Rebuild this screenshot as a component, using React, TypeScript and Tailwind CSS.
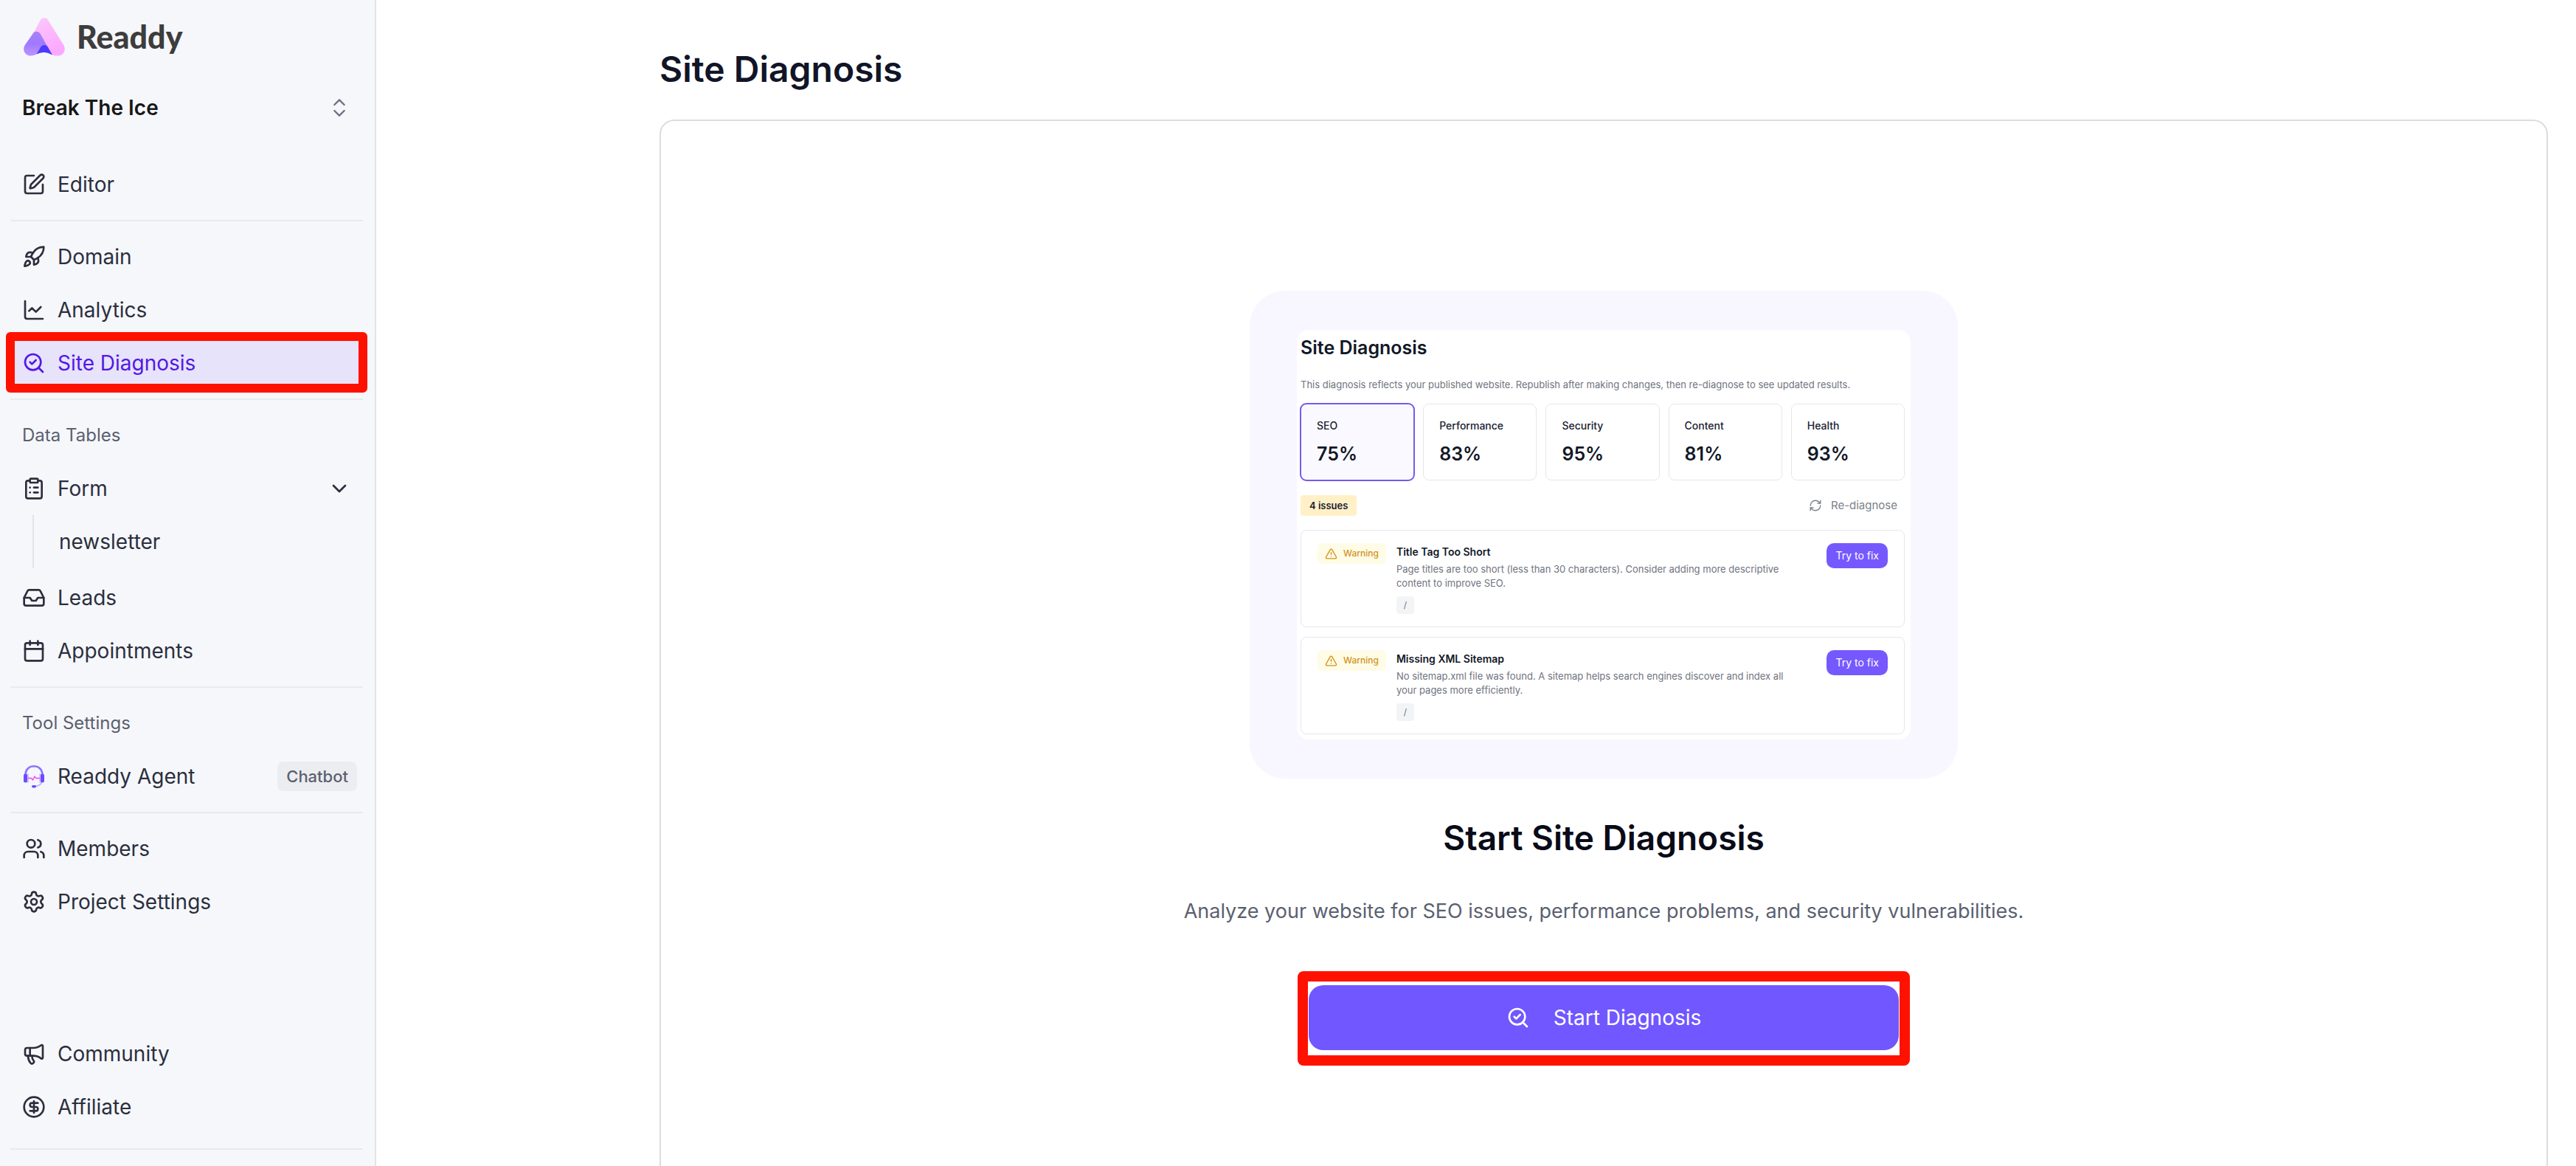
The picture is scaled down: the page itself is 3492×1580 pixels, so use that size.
import React from 'react';
import {
  Calendar,
  ChartLine,
  ChevronDown,
  ChevronsUpDown,
  CircleDollarSign,
  ClipboardList,
  Inbox,
  Megaphone,
  RefreshCw,
  Rocket,
  SearchCheck,
  Settings,
  SquarePen,
  TriangleAlert,
  Users,
} from 'lucide-react';

interface NavItemProps {
  icon: React.ReactNode;
  label: string;
  active?: boolean;
  children?: React.ReactNode;
}

interface Issue {
  title: string;
  description: string;
  path: string;
}

const scores = [
  { label: 'SEO', value: '75%' },
  { label: 'Performance', value: '83%' },
  { label: 'Security', value: '95%' },
  { label: 'Content', value: '81%' },
  { label: 'Health', value: '93%' },
];

const issues: Issue[] = [
  {
    title: 'Title Tag Too Short',
    description:
      'Page titles are too short (less than 30 characters). Consider adding more descriptive content to improve SEO.',
    path: '/',
  },
  {
    title: 'Missing XML Sitemap',
    description:
      'No sitemap.xml file was found. A sitemap helps search engines discover and index all your pages more efficiently.',
    path: '/',
  },
];

const Logo = () => (
  <svg width="56" height="52" viewBox="0 0 56 52" aria-hidden="true">
    <defs>
      <linearGradient id="logoPink" x1="0" y1="0" x2="0.4" y2="1">
        <stop offset="0" stopColor="#fcc8fb" />
        <stop offset="1" stopColor="#fba9ff" />
      </linearGradient>
      <linearGradient id="logoViolet" x1="0" y1="0" x2="0" y2="1">
        <stop offset="0" stopColor="#a783f5" />
        <stop offset="0.5" stopColor="#a079ff" />
        <stop offset="1" stopColor="#bd94ff" />
      </linearGradient>
    </defs>
    <path
      d="M23 3C25-.6 31-.6 33 3L54.500 37.500C58 44 54 51.500 47 51.500C42 51.500 40 51 37 49L14 19.500Z"
      fill="url(#logoPink)"
    />
    <path
      d="M13 21C15 18 20 18 22.500 21.500L38.500 50C34 48 32 47 27 47C19 47 17 51.500 10 51.500C2 51.500-2 44 1.500 37.500Z"
      fill="url(#logoViolet)"
    />
    <path d="M23 40C25 36 31 36 33 40L39 50.500C34 48 32 47 27 47C23 47 21 48 17.500 49.500Z" fill="#4a3bff" />
  </svg>
);

const HeadsetIcon = () => (
  <svg width="32" height="32" viewBox="0 0 32 32" fill="none" aria-hidden="true">
    <path d="M4.500 13C5 6 10 2.300 16 2.300S27 6 27.500 13" stroke="#8b76ff" strokeWidth="2.600" />
    <path d="M27 22C26 27 22 29.500 17 29.500" stroke="#b9a8ff" strokeWidth="1.500" />
    <rect x="5.500" y="12.500" width="3.500" height="12" fill="#cfc5ff" />
    <rect x="23" y="12.500" width="3.500" height="12" fill="#cfc5ff" />
    <rect x="2" y="12.500" width="5" height="12" rx="2.500" fill="#6a4dff" />
    <rect x="25" y="12.500" width="5" height="12" rx="2.500" fill="#6a4dff" />
    <rect x="13" y="28" width="6" height="3.400" rx="1.700" fill="#6a4dff" />
    <path d="M8 18.500H12.500L14.500 21L17 16L18.500 18.500H24" stroke="#f542f0" strokeWidth="1.400" strokeLinejoin="round" />
  </svg>
);

const NavItem: React.FC<NavItemProps> = ({ icon, label, active, children }) => (
  <a
    href="#"
    className={`relative flex h-16 items-center gap-4 rounded-xl pl-4 pr-2 text-[28px] ${
      active ? 'bg-[#e7e3fa] text-[#5219e6]' : 'text-[#2b2f3d]'
    }`}
  >
    {icon}
    <span className="flex-1">{label}</span>
    {children}
    {/* Callout frame */}
    {active && (
      <span className="absolute -inset-x-1.5 -top-2.5 -bottom-2 rounded-md border-12 border-[#ff1100]" />
    )}
  </a>
);

const Divider = () => <hr className="my-4 border-t-2 border-[#e9eaee]" />;

const NavLabel = ({ children }: { children: React.ReactNode }) => (
  <h3 className="mb-2 flex h-16 items-center pl-4 text-2xl text-[#5b6070]">{children}</h3>
);

const Sidebar = () => (
  <aside className="flex w-[510px] shrink-0 flex-col border-r-2 border-[#e3e4e8] bg-[#f6f7fb] pr-4 pl-3.5">
    <div className="flex h-25 items-center gap-4 pl-4.5">
      <Logo />
      <span className="font-[Lato,sans-serif] text-[43px] font-black text-[#3d3d3d]">Readdy</span>
    </div>
    <button className="mt-3.5 mb-10 flex h-16 items-center justify-between pr-4 pl-4 text-[28px] font-semibold text-[#181818]">
      Break The Ice
      <ChevronsUpDown size={32} strokeWidth={1.75} className="text-[#6b7080]" />
    </button>

    <nav className="flex flex-1 flex-col">
      <NavItem icon={<SquarePen size={32} />} label="Editor" />
      <Divider />
      <div className="flex flex-col gap-2">
        <NavItem icon={<Rocket size={32} />} label="Domain" />
        <NavItem icon={<ChartLine size={32} />} label="Analytics" />
        <NavItem icon={<SearchCheck size={32} />} label="Site Diagnosis" active />
      </div>
      <Divider />
      <NavLabel>Data Tables</NavLabel>
      <NavItem icon={<ClipboardList size={32} />} label="Form">
        <ChevronDown size={32} className="mr-2" />
      </NavItem>
      <div className="mt-1 mb-2 ml-7.5 flex h-18 items-center border-l-2 border-[#e3e4e3] pl-8.5">
        <a href="#" className="text-[28px] text-[#2b2f3d]">
          newsletter
        </a>
      </div>
      <div className="flex flex-col gap-2">
        <NavItem icon={<Inbox size={32} />} label="Leads" />
        <NavItem icon={<Calendar size={32} />} label="Appointments" />
      </div>
      <Divider />
      <NavLabel>Tool Settings</NavLabel>
      <NavItem icon={<HeadsetIcon />} label="Readdy Agent">
        <span className="flex h-10 items-center rounded-lg bg-[#ecedf1] px-3 text-[22px] font-medium text-[#5b6070]">
          Chatbot
        </span>
      </NavItem>
      <Divider />
      <div className="flex flex-col gap-2">
        <NavItem icon={<Users size={32} />} label="Members" />
        <NavItem icon={<Settings size={32} />} label="Project Settings" />
      </div>
      <div className="mt-auto flex flex-col gap-2 pt-8">
        <NavItem icon={<Megaphone size={32} />} label="Community" />
        <NavItem icon={<CircleDollarSign size={32} />} label="Affiliate" />
      </div>
      <hr className="mt-6 mb-5.5 border-t-2 border-[#e9eaee]" />
    </nav>
  </aside>
);

const IssueCard = ({ issue }: { issue: Issue }) => (
  <li className="flex items-start rounded-lg border border-[#e5e7eb] px-[22px] py-[17px]">
    <span className="flex h-7 items-center gap-2 rounded-md bg-[#fefce6] px-2.5 text-xs font-medium text-[#d3921a]">
      <TriangleAlert size={17} />
      Warning
    </span>
    <div className="ml-3.5 w-[540px]">
      <h4 className="text-sm leading-6 font-semibold text-[#111827]">{issue.title}</h4>
      <p className="mt-0.5 text-[13px] leading-[19px] text-[#6f7480]">{issue.description}</p>
      <span className="mt-2 flex size-6 items-center justify-center rounded bg-[#f3f4f6] text-xs text-[#6f7480]">
        {issue.path}
      </span>
    </div>
    <button className="ml-auto h-[34px] rounded-[10px] bg-[#7559ff] px-3 text-sm text-white">Try to fix</button>
  </li>
);

const Preview = () => (
  <div className="w-[960px] rounded-[48px] bg-[#f8f6ff] px-16 py-[53px]">
    <div className="rounded-2xl bg-white pt-3 pr-2 pb-[7px] pl-[5px]">
      <h3 className="text-[25px] leading-6 font-semibold text-[#111827]">Site Diagnosis</h3>
      <p className="mt-7 text-[13px] leading-5 text-[#6f7480]">
        This diagnosis reflects your published website. Republish after making changes, then re-diagnose to see updated
        results.
      </p>
      <div className="mt-4 grid grid-cols-5 gap-3">
        {scores.map((score, i) => (
          <div
            key={score.label}
            className={`rounded-lg py-5 pl-[22px] ${
              i === 0 ? 'bg-[#faf9ff] outline-2 -outline-offset-1 outline-[#7559f0]' : 'outline -outline-offset-1 outline-[#e5e7eb]'
            }`}
          >
            <div className="text-sm font-medium text-[#1b2130]">{score.label}</div>
            <div className="mt-3 text-[25px] leading-8 font-semibold text-[#111827]">{score.value}</div>
          </div>
        ))}
      </div>
      <div className="mt-5 flex items-center justify-between">
        <span className="rounded bg-[#fff0c7] px-3 py-1 text-[13px] leading-5 font-semibold text-[#1b2130]">
          4 issues
        </span>
        <button className="flex items-center gap-3 pr-2.5 text-[15px] text-[#7b7f8a]">
          <RefreshCw size={18} strokeWidth={1.75} />
          Re-diagnose
        </button>
      </div>
      <ul className="mt-[19px] flex flex-col gap-[13px]">
        {issues.map((issue) => (
          <IssueCard key={issue.title} issue={issue} />
        ))}
      </ul>
    </div>
  </div>
);

export default function App() {
  return (
    <div className="flex min-h-screen bg-white font-[Inter,sans-serif]">
      <Sidebar />
      <main className="flex flex-1 flex-col pt-16 pr-[38px] pl-96">
        <h1 className="text-5xl leading-15 font-semibold text-[#111528]">Site Diagnosis</h1>
        <section className="mt-[38px] flex flex-1 flex-col items-center rounded-t-[20px] border-2 border-b-0 border-[#dcdce2] pt-[230px] pb-10">
          <Preview />
          <h2 className="mt-12 text-[46px] leading-16 font-semibold text-[#080b18]">Start Site Diagnosis</h2>
          <p className="mt-12 text-[27px] leading-10 text-[#5b6070]">
            Analyze your website for SEO issues, performance problems, and security vulnerabilities.
          </p>
          {/* Callout frame */}
          <div className="mt-[61px] w-[830px] rounded-lg border-14 border-[#ff1100] px-px pt-[5px] pb-[7px]">
            <button className="flex h-22 w-full items-center justify-center gap-8 rounded-[20px] bg-[#7157ff] text-[28px] text-white">
              <SearchCheck size={32} />
              Start Diagnosis
            </button>
          </div>
        </section>
      </main>
    </div>
  );
}
